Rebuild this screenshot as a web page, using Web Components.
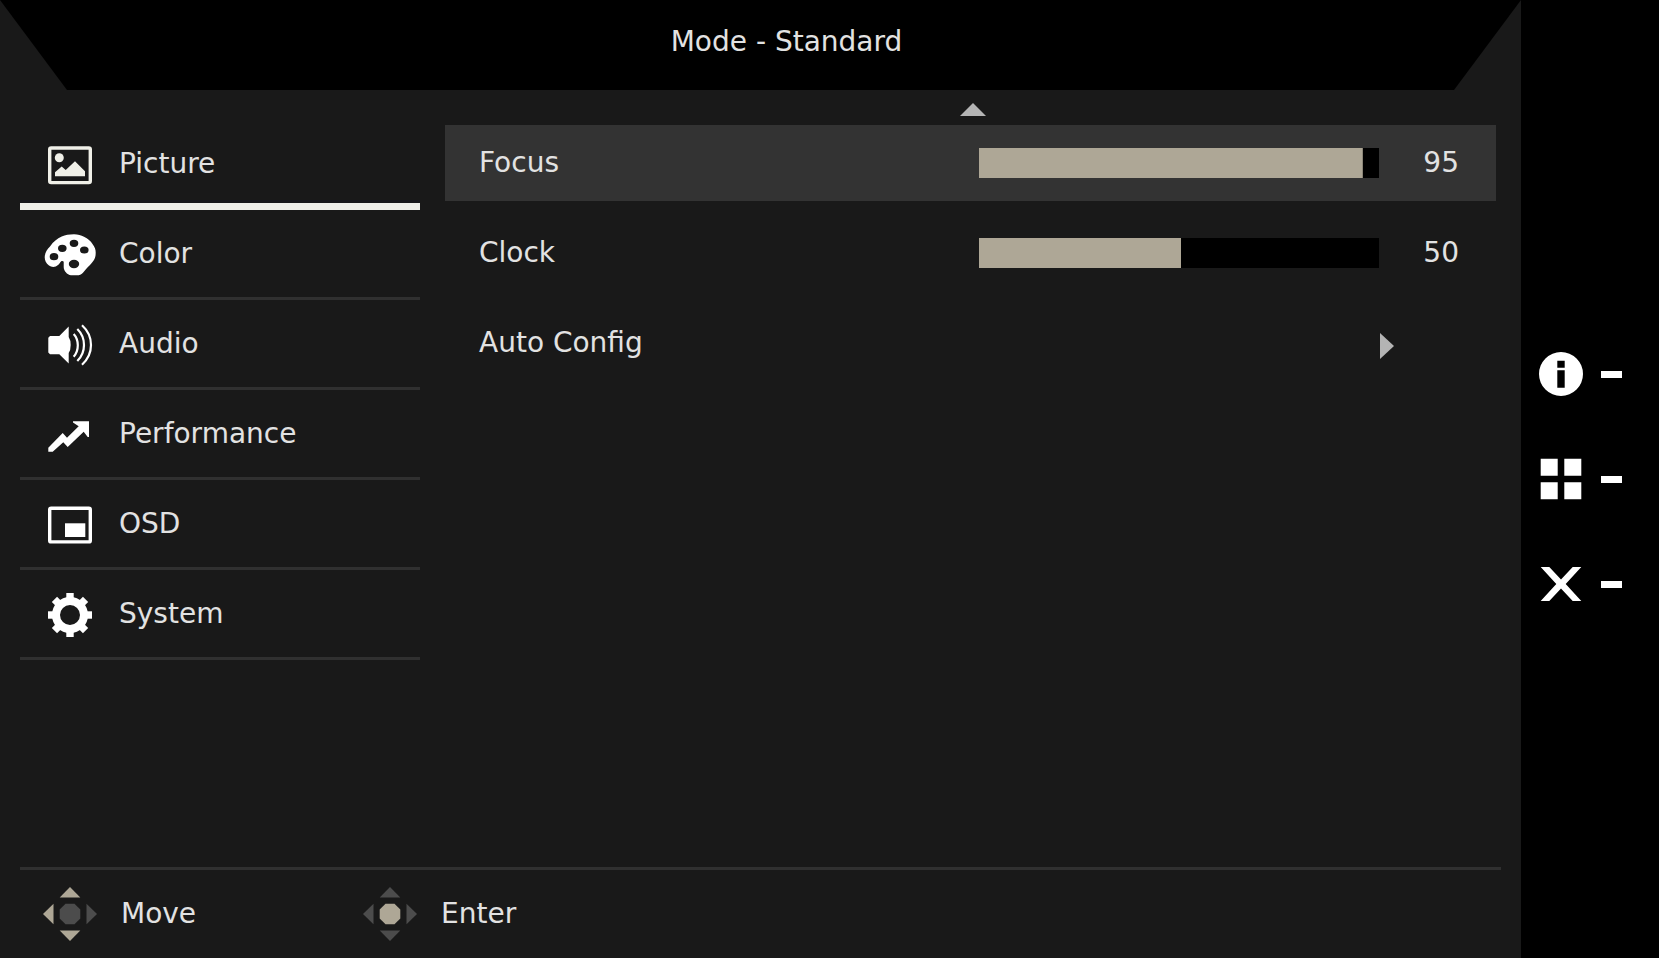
<!DOCTYPE html>
<html lang="en">
<head>
<meta charset="utf-8">
<meta name="viewport" content="width=device-width, initial-scale=1">
<title>Monitor OSD</title>
<style>
:root {
  --bg: #191919;
  --line: #303030;
  --hl: #333333;
  --tx: #e2e2e2;
  --sand: #aea796;
  --dim: #4c4c4c;
  --arrow: #b4b4b4;
}
* { box-sizing: border-box; }
body {
  margin: 0;
  background: #000;
  color: var(--tx);
  font: 28px/36px "DejaVu Sans", sans-serif;
}
</style>
</head>
<body>
<osd-screen>
  <osd-title slot="title">Mode - Standard</osd-title>

  <osd-nav-item slot="nav" icon="picture" active>Picture</osd-nav-item>
  <osd-nav-item slot="nav" icon="palette">Color</osd-nav-item>
  <osd-nav-item slot="nav" icon="audio">Audio</osd-nav-item>
  <osd-nav-item slot="nav" icon="trend">Performance</osd-nav-item>
  <osd-nav-item slot="nav" icon="pip">OSD</osd-nav-item>
  <osd-nav-item slot="nav" icon="gear">System</osd-nav-item>

  <osd-slider label="Focus" value="95" active></osd-slider>
  <osd-slider label="Clock" value="50"></osd-slider>
  <osd-link-row>Auto Config</osd-link-row>

  <osd-hint slot="hints" keys="up left down">Move</osd-hint>
  <osd-hint slot="hints" keys="center">Enter</osd-hint>

  <osd-key slot="keys" icon="info" label="Information"></osd-key>
  <osd-key slot="keys" icon="grid" label="Menu"></osd-key>
  <osd-key slot="keys" icon="close" label="Close"></osd-key>
</osd-screen>

<script>
const BASE_CSS = `
* { box-sizing: border-box; }
button {
  margin: 0;
  padding: 0;
  border: 0;
  background: none;
  color: inherit;
  font: inherit;
  text-align: left;
  cursor: pointer;
}
svg { display: block; flex: none; }
`;

// Menu icons share a 54x54 box centred on 27,27
const NAV_ICONS = {
  picture: `
    <rect x="6.7" y="10" width="40.6" height="34.6" rx="1.5" fill="none" stroke="currentColor" stroke-width="3.4"/>
    <circle cx="16.3" cy="19.7" r="4.5"/>
    <path d="M12 38.3V34.3L18.7 28.5L22.7 32L32 23.3L42 33.2V38.3Z"/>`,
  palette: `
    <path fill-rule="evenodd" d="M1.7 29.3C1.8 25 4 21.5 7 18.5C10.5 13.5 14 10.5 18.7 8.5C22.5 7 26 6.3 31 6.3C35 6.3 38 7.2 41 8.8C45 10.8 47.5 13 49.5 16C51.8 19.5 52.7 21 52.7 24.5C52.7 28 52.3 31 49.5 34C47.5 36.5 46 38 44 40C41 43.5 39 47.3 34 47.3H28C24 46.5 20.7 43 20.7 39V33.7C20 32.7 19 32.7 18.2 33.3C16.8 34.8 16.5 36 15 37C12.5 39.5 8.5 39.5 6 37.5C3 35.5 1.7 32.5 1.7 29.3Z
      M26.7 15.3a4.3 3.6 0 1 0 8.6 0a4.3 3.6 0 1 0 -8.6 0Z
      M15 20.3a4.3 3.6 0 1 0 8.6 0a4.3 3.6 0 1 0 -8.6 0Z
      M6.7 28.7a4.3 3.6 0 1 0 8.6 0a4.3 3.6 0 1 0 -8.6 0Z
      M37 22a4.3 3.6 0 1 0 8.6 0a4.3 3.6 0 1 0 -8.6 0Z
      M25.8 36a5.2 4.2 0 1 0 10.4 0a5.2 4.2 0 1 0 -10.4 0Z"/>`,
  audio: `
    <path d="M7 18H16.3L25.7 8.5V19Q27.7 22 27.7 27T25.7 35V45.5L16.3 36.3H7L5.3 34.6V19.7Z"/>
    <g fill="none" stroke="currentColor" stroke-width="2.2">
      <path d="M30.7 16Q34.8 20.5 34.8 27.3T30.7 38.7"/>
      <path d="M34.3 11Q41 17.5 41 27T34.3 43"/>
      <path d="M39 7.3Q48 15.5 48 27T39 46.7"/>
    </g>`,
  trend: `<path d="M5.3 39.8L19.7 25L24 29.8L35.7 18.3L30 14.5V13.3H46V29H44.7L40.7 23.7L24.7 39L20.3 34.3L9.7 43.7H5.3Z"/>`,
  pip: `
    <rect x="6.7" y="10.3" width="40.6" height="33.6" rx="1.5" fill="none" stroke="currentColor" stroke-width="3.4"/>
    <rect x="22" y="25.3" width="20.3" height="13.7"/>`,
  gear: `
    <circle cx="27" cy="27" r="14" fill="none" stroke="currentColor" stroke-width="8"/>
    ${[0, 45, 90, 135, 180, 225, 270, 315].map(a =>
      `<rect x="23.3" y="5" width="7.4" height="7" transform="rotate(${a} 27 27)"/>`).join("")}`
};

// Side key icons share a 44x44 box
const KEY_ICONS = {
  info: `<path fill-rule="evenodd" d="M22 0a22 22 0 1 0 0 44a22 22 0 1 0 0-44ZM18.3 8.7H25.7V15.7H18.3ZM18.3 18.3H25.7V35.7H18.3Z"/>`,
  grid: `<path d="M1.7 1.7h17v17h-17ZM25.3 1.7h17v17h-17ZM1.7 25.3h17v17h-17ZM25.3 25.3h17v17h-17Z"/>`,
  close: `<path d="M1.7 5H10.3L22 17.4L33.7 5H42.3L26.7 22L42.3 39H33.7L22 26.6L10.3 39H1.7L17.3 22Z"/>`
};

class OsdScreen extends HTMLElement {
  constructor() {
    super();
    this.attachShadow({ mode: "open" }).innerHTML = `
<style>${BASE_CSS}
:host {
  display: grid;
  grid-template-columns: minmax(0, 1fr) 138px;
  min-height: 100vh;
}
.panel {
  display: flex;
  flex-direction: column;
  background: var(--bg);
}
main {
  flex: 1;
  display: grid;
  grid-template-columns: 400px minmax(0, 1fr);
  gap: 25px;
  padding: 0 20px;
}
nav { padding-top: 30px; }
.up {
  display: block;
  margin: 13px auto 9px;
}
.rows {
  display: grid;
  gap: 14px;
  margin-right: 5px;
}
footer {
  display: flex;
  align-items: center;
  height: 91px;
  margin: 0 20px;
  padding-left: 23px;
  border-top: 3px solid var(--line);
}
aside {
  display: flex;
  flex-direction: column;
  justify-content: center;
  background: #000;
}
</style>
<div class="panel">
  <slot name="title"></slot>
  <main>
    <nav aria-label="Menu"><slot name="nav"></slot></nav>
    <section>
      <button class="up" aria-label="Scroll up">
        <svg width="26" height="13" fill="var(--arrow)"><path d="M13 0L26 13H0Z"/></svg>
      </button>
      <div class="rows"><slot></slot></div>
    </section>
  </main>
  <footer><slot name="hints"></slot></footer>
</div>
<aside><slot name="keys"></slot></aside>`;
  }
}

class OsdTitle extends HTMLElement {
  constructor() {
    super();
    this.attachShadow({ mode: "open" }).innerHTML = `
<style>${BASE_CSS}
:host { display: block; }
header {
  height: 90px;
  padding: 24px 0 0 52px;
  background: #000;
  clip-path: polygon(0 0, 100% 0, calc(100% - 67px) 100%, 67px 100%);
  text-align: center;
}
h1 { margin: 0; font: inherit; }
</style>
<header><h1><slot></slot></h1></header>`;
  }
}

class OsdNavItem extends HTMLElement {
  connectedCallback() {
    const active = this.hasAttribute("active");
    this.attachShadow({ mode: "open" }).innerHTML = `
<style>${BASE_CSS}
:host { display: block; }
button {
  display: flex;
  align-items: center;
  gap: 22px;
  width: 100%;
  height: 90px;
  padding-left: 23px;
  box-shadow: inset 0 -3px var(--line);
}
button[aria-current] { box-shadow: inset 0 -7px #f0f0e8; }
svg { color: #fff; fill: currentColor; }
button[aria-current] svg { color: #f0f0e8; }
span { padding-bottom: 3px; }
</style>
<button ${active ? 'aria-current="page"' : ""}>
  <svg width="54" height="54" viewBox="0 0 54 54" aria-hidden="true">${NAV_ICONS[this.getAttribute("icon")]}</svg>
  <span><slot></slot></span>
</button>`;
  }
}

const ROW_CSS = `
:host { display: block; }
.row {
  display: grid;
  grid-template-columns: minmax(0, 1fr) 400px 80px;
  align-items: center;
  width: 100%;
  height: 76px;
  padding: 0 37px 0 34px;
}
`;

class OsdSlider extends HTMLElement {
  connectedCallback() {
    const label = this.getAttribute("label");
    const value = this.getAttribute("value");
    this.attachShadow({ mode: "open" }).innerHTML = `
<style>${BASE_CSS}${ROW_CSS}
:host([active]) { background: var(--hl); }
input {
  appearance: none;
  width: 100%;
  height: 30px;
  margin: 0;
  background: linear-gradient(var(--sand), var(--sand)) 0 0 / var(--fill) 100% no-repeat #000;
}
input::-webkit-slider-thumb { appearance: none; width: 1px; height: 30px; }
output { text-align: right; }
</style>
<div class="row">
  <label for="range">${label}</label>
  <input id="range" type="range" min="0" max="100" value="${value}">
  <output for="range">${value}</output>
</div>`;
    this._input = this.shadowRoot.querySelector("input");
    this._output = this.shadowRoot.querySelector("output");
    this._input.addEventListener("input", () => this._update());
    this._update();
  }

  _update() {
    // the fill runs slightly ahead of the value, clipped at the end of the track
    this._input.style.setProperty("--fill", `${Math.min(100, this._input.value * 1.01)}%`);
    this._output.textContent = this._input.value;
  }
}

class OsdLinkRow extends HTMLElement {
  constructor() {
    super();
    this.attachShadow({ mode: "open" }).innerHTML = `
<style>${BASE_CSS}${ROW_CSS}
svg { grid-column: 3; margin-top: 6px; }
</style>
<button class="row">
  <span><slot></slot></span>
  <svg width="16" height="26" fill="var(--arrow)" aria-hidden="true"><path d="M1 0L15 13L1 26Z"/></svg>
</button>`;
  }
}

class OsdHint extends HTMLElement {
  connectedCallback() {
    const keys = this.getAttribute("keys").split(" ");
    const fill = k => keys.includes(k) ? "var(--sand)" : "var(--dim)";
    this.attachShadow({ mode: "open" }).innerHTML = `
<style>${BASE_CSS}
:host { display: block; width: 320px; }
div { display: flex; align-items: center; gap: 24px; }
</style>
<div>
  <svg width="54" height="54" viewBox="0 0 54 54" aria-hidden="true">
    <path d="M27 0L37.3 10.5H16.7Z" fill="${fill("up")}"/>
    <path d="M0 27L10.5 16.7V37.3Z" fill="${fill("left")}"/>
    <path d="M54 27L43.5 16.7V37.3Z" fill="${fill("right")}"/>
    <path d="M27 54L37.3 43.5H16.7Z" fill="${fill("down")}"/>
    <path d="M22.5 16.7H31.5L37.3 22.5V31.5L31.5 37.3H22.5L16.7 31.5V22.5Z" fill="${fill("center")}"/>
  </svg>
  <span><slot></slot></span>
</div>`;
  }
}

class OsdKey extends HTMLElement {
  connectedCallback() {
    this.attachShadow({ mode: "open" }).innerHTML = `
<style>${BASE_CSS}
:host { display: block; }
button {
  display: flex;
  align-items: center;
  gap: 18px;
  width: 100%;
  height: 105px;
  padding-left: 18px;
}
i { width: 21px; height: 7px; background: #fff; }
</style>
<button aria-label="${this.getAttribute("label")}">
  <svg width="44" height="44" viewBox="0 0 44 44" fill="#fff" aria-hidden="true">${KEY_ICONS[this.getAttribute("icon")]}</svg>
  <i></i>
</button>`;
  }
}

customElements.define("osd-screen", OsdScreen);
customElements.define("osd-title", OsdTitle);
customElements.define("osd-nav-item", OsdNavItem);
customElements.define("osd-slider", OsdSlider);
customElements.define("osd-link-row", OsdLinkRow);
customElements.define("osd-hint", OsdHint);
customElements.define("osd-key", OsdKey);
</script>
</body>
</html>
